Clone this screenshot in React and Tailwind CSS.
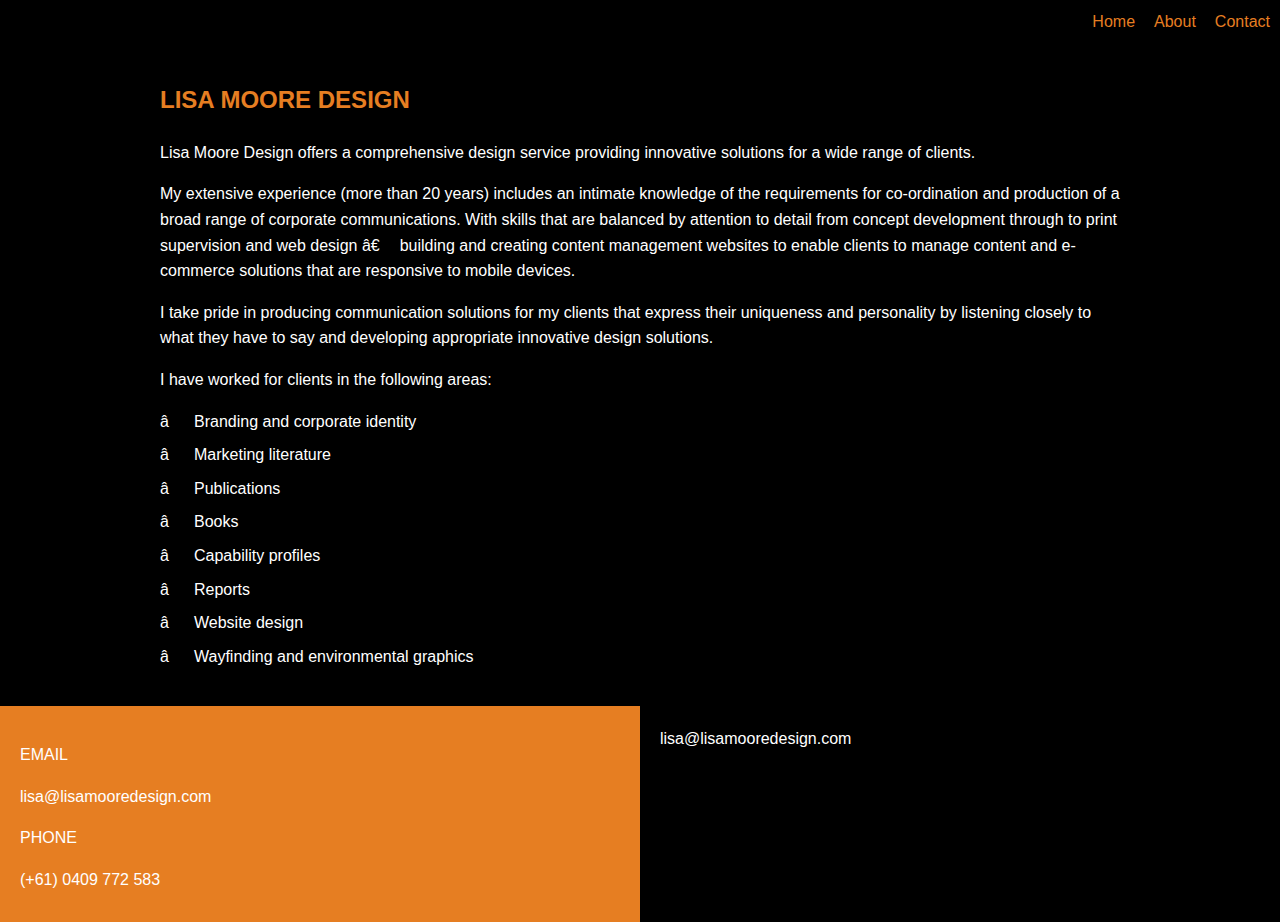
import React from 'react'

const areas = [
  'Branding and corporate identity',
  'Marketing literature',
  'Publications',
  'Books',
  'Capability profiles',
  'Reports',
  'Website design',
  'Wayfinding and environmental graphics',
]

function Nav() {
  return (
    <nav className="flex justify-end h-[44px] pt-[10px] pr-[10px]">
      <ul className="flex gap-[19px] leading-6">
        <li><a href="#" className="text-[#e67e22]">Home</a></li>
        <li><a href="#" className="text-[#e67e22]">About</a></li>
        <li><a href="#" className="text-[#e67e22]">Contact</a></li>
      </ul>
    </nav>
  )
}

export default function App() {
  return (
    <div
      className="min-h-[922px] bg-black text-white text-[16px]"
      style={{ fontFamily: '"Liberation Sans", Arial, sans-serif' }}
    >
      <Nav />

      <main className="max-w-[960px] mx-auto pt-[42px] pb-[29px] leading-[25.6px]">
        <h1 className="text-[24px] leading-[28.8px] font-bold text-[#e67e22] mb-[25px]">
          LISA MOORE DESIGN
        </h1>
        <p className="mb-4">
          Lisa Moore Design offers a comprehensive design service providing innovative solutions for a wide range of clients.
        </p>
        <p className="mb-4">
          My extensive experience (more than 20 years) includes an intimate knowledge of the requirements for co-ordination and production of a broad range of corporate communications. With skills that are balanced by attention to detail from concept development through to print supervision and web design â€<span className="inline-block w-[20px]"></span>building and creating content management websites to enable clients to manage content and e-commerce solutions that are responsive to mobile devices.
        </p>
        <p className="mb-4">
          I take pride in producing communication solutions for my clients that express their uniqueness and personality by listening closely to what they have to say and developing appropriate innovative design solutions.
        </p>
        <p className="mb-4">I have worked for clients in the following areas:</p>
        <div>
          {areas.map((a) => (
            <p key={a} className="flex mb-2">
              <span className="w-[34px] shrink-0">â</span>
              <span>{a}</span>
            </p>
          ))}
        </div>
      </main>

      <footer className="grid grid-cols-2 leading-[25.6px]">
        <div className="bg-[#e67e22] px-5 pt-5 pb-[15px]">
          <p className="my-4">EMAIL</p>
          <p className="my-4">lisa@lisamooredesign.com</p>
          <p className="my-4">PHONE</p>
          <p className="my-4">(+61) 0409 772 583</p>
        </div>
        <div className="p-5">
          <p>lisa@lisamooredesign.com</p>
        </div>
      </footer>
    </div>
  )
}
